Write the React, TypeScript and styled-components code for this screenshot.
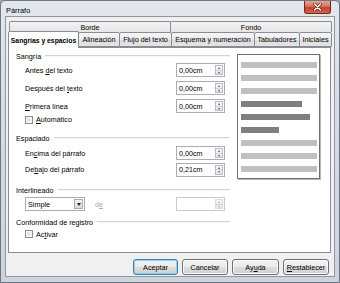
import React from 'react';
import styled, { createGlobalStyle } from 'styled-components';

const GlobalStyle = createGlobalStyle`
  html, body {
    margin: 0;
    padding: 0;
    width: 340px;
    height: 283px;
    overflow: hidden;
    background: #9aa6b2;
  }
  * {
    box-sizing: border-box;
  }
`;

const StyledWindow = styled.div`
  width: 340px;
  height: 283px;
  display: flex;
  flex-direction: column;
  background: linear-gradient(180deg, #e4e8ed 0%, #d6dce3 40%, #cdd4dc 100%);
  border: 1px solid #6b7785;
  border-radius: 5px 5px 0 0;
  font-family: 'Liberation Sans', Arial, sans-serif;
  font-size: 7.2px;
  color: #000;
`;

const StyledTitleBar = styled.div`
  height: 17px;
  display: flex;
  align-items: flex-start;
  padding-left: 5px;
`;

const StyledTitle = styled.span`
  margin-top: 5px;
  font-size: 7.4px;
`;

const StyledClose = styled.div`
  margin-left: auto;
  margin-right: 8px;
  width: 27px;
  height: 13px;
  border: 1px solid #6e2a22;
  border-top: none;
  border-radius: 0 0 3px 3px;
  background: linear-gradient(180deg, #e8a593 0%, #d8705a 45%, #c7432d 55%, #d7624a 100%);
  display: flex;
  align-items: center;
  justify-content: center;
`;

const StyledClient = styled.div`
  flex: 1;
  margin: 0 4px 0 4px;
  background: #f0f0f0;
  border: 1px solid #8d98a5;
  display: flex;
  flex-direction: column;
  padding: 4px 3px 1px 2px;
`;

const StyledTabRow = styled.div<{ $height: number; $offset: number }>`
  display: flex;
  align-items: flex-end;
  height: ${(p) => p.$height}px;
  padding-left: ${(p) => p.$offset}px;
  position: relative;
`;

const StyledTab = styled.div<{ $width: number; $active?: boolean }>`
  width: ${(p) => p.$width}px;
  height: ${(p) => (p.$active ? 17 : 15)}px;
  margin-bottom: ${(p) => (p.$active ? -1 : 0)}px;
  margin-right: -1px;
  display: flex;
  align-items: center;
  justify-content: center;
  border: 1px solid #898c95;
  border-bottom: ${(p) => (p.$active ? 'none' : '1px solid #898c95')};
  border-radius: 2px 2px 0 0;
  background: ${(p) =>
    p.$active ? '#ffffff' : 'linear-gradient(180deg, #f6f6f6 0%, #ebebeb 50%, #dddddd 51%, #e4e4e4 100%)'};
  font-weight: ${(p) => (p.$active ? 'bold' : 'normal')};
  font-size: ${(p) => (p.$active ? 6.8 : 7.2)}px;
  white-space: nowrap;
  position: relative;
  z-index: ${(p) => (p.$active ? 2 : 1)};
`;

const StyledBackTab = styled(StyledTab)`
  height: 11px;
  border-bottom: none;
  background: linear-gradient(180deg, #f4f4f4 0%, #e6e6e6 100%);
`;

const StyledPanel = styled.div`
  height: 206px;
  background: #ffffff;
  border: 1px solid #898c95;
  display: flex;
  padding: 1px 0 0 7px;
  position: relative;
  z-index: 1;
`;

const StyledForm = styled.div`
  width: 214px;
  display: flex;
  flex-direction: column;
`;

const StyledHeader = styled.div<{ $top: number }>`
  height: 10px;
  margin-top: ${(p) => p.$top}px;
  display: flex;
  align-items: center;
  gap: 4px;
  &::after {
    content: '';
    flex: 1;
    height: 1px;
    background: #d5d5d5;
    border-bottom: 1px solid #f4f4f4;
  }
`;

const StyledRow = styled.div<{ $height: number; $top?: number }>`
  height: ${(p) => p.$height}px;
  margin-top: ${(p) => p.$top ?? 0}px;
  display: flex;
  align-items: center;
  padding: 0 5px 0 9px;
`;

const StyledLabel = styled.span<{ $disabled?: boolean }>`
  color: ${(p) => (p.$disabled ? '#a0a0a0' : '#000')};
`;

const StyledSpin = styled.div<{ $disabled?: boolean }>`
  margin-left: auto;
  width: 49px;
  height: 14px;
  border: 1px solid ${(p) => (p.$disabled ? '#c8cbd0' : '#abadb3')};
  background: #fff;
  display: flex;
  align-items: center;
  padding-left: 2px;
`;

const StyledSpinText = styled.span`
  flex: 1;
`;

const StyledSpinButtons = styled.div<{ $disabled?: boolean }>`
  width: 8px;
  height: 10px;
  margin-right: 1px;
  display: flex;
  flex-direction: column;
  border: 1px solid ${(p) => (p.$disabled ? '#dcdcdc' : '#b9bcc2')};
  background: linear-gradient(180deg, #f6f7f9 0%, #e2e6ec 100%);
`;

const StyledArrow = styled.div<{ $up?: boolean; $disabled?: boolean }>`
  flex: 1;
  display: flex;
  align-items: center;
  justify-content: center;
  border-bottom: ${(p) => (p.$up ? '1px solid #d0d4da' : 'none')};
  &::before {
    content: '';
    border-left: 1.5px solid transparent;
    border-right: 1.5px solid transparent;
    ${(p) =>
      p.$up
        ? `border-bottom: 2px solid ${p.$disabled ? '#b8b8b8' : '#4d5a66'};`
        : `border-top: 2px solid ${p.$disabled ? '#b8b8b8' : '#4d5a66'};`}
  }
`;

const StyledCheck = styled.div`
  width: 8px;
  height: 8px;
  border: 1px solid #8e8f8f;
  background: linear-gradient(135deg, #dcdcdc 0%, #f4f4f4 100%);
  box-shadow: inset 0 0 0 1px #f6f6f6;
  margin-right: 3px;
`;

const StyledSelect = styled.div`
  width: 60px;
  height: 14px;
  border: 1px solid #abadb3;
  background: #fff;
  display: flex;
  align-items: center;
  padding-left: 2px;
`;

const StyledSelectButton = styled.div`
  margin-left: auto;
  margin-right: 1px;
  width: 9px;
  height: 10px;
  border: 1px solid #a9acb2;
  background: linear-gradient(180deg, #f2f2f2 0%, #d8d8d8 100%);
  display: flex;
  align-items: center;
  justify-content: center;
  &::before {
    content: '';
    border-left: 2.5px solid transparent;
    border-right: 2.5px solid transparent;
    border-top: 3px solid #222;
  }
`;

const StyledDe = styled.span`
  margin-left: 10px;
  color: #a9a9a9;
`;

const StyledPreview = styled.div`
  margin: 5px 0 0 7px;
  width: 83px;
  height: 125px;
  border: 1px solid #6f6f6f;
  box-shadow: 1px 1px 0 #b8b8b8;
  background: #fff;
  display: flex;
  flex-direction: column;
  gap: 7px;
  padding: 7px 2px 0 3px;
`;

const StyledBar = styled.div<{ $width: number; $dark?: boolean }>`
  width: ${(p) => p.$width}px;
  height: 6px;
  background: ${(p) => (p.$dark ? '#7f7f7f' : '#c0c0c0')};
`;

const StyledButtonRow = styled.div`
  display: flex;
  justify-content: flex-end;
  gap: 4px;
  margin-top: 6px;
  padding-right: 2px;
`;

const StyledButton = styled.div<{ $width: number; $default?: boolean }>`
  width: ${(p) => p.$width}px;
  height: 16px;
  display: flex;
  align-items: center;
  justify-content: center;
  border: 1px solid ${(p) => (p.$default ? '#3c7fb1' : '#707070')};
  border-radius: 3px;
  background: linear-gradient(180deg, #f2f2f2 0%, #ebebeb 50%, #dddddd 51%, #cfcfcf 100%);
  box-shadow: inset 0 0 0 1px ${(p) => (p.$default ? '#8fd3f2' : '#fbfbfb')};
`;

const StyledBottomFrame = styled.div`
  height: 5px;
`;

const U = styled.span`
  text-decoration: underline;
  text-underline-offset: 1px;
`;

const SpinField = ({ value, disabled }: { value?: string; disabled?: boolean }) => (
  <StyledSpin $disabled={disabled}>
    <StyledSpinText>{value}</StyledSpinText>
    <StyledSpinButtons $disabled={disabled}>
      <StyledArrow $up $disabled={disabled} />
      <StyledArrow $disabled={disabled} />
    </StyledSpinButtons>
  </StyledSpin>
);

const backTabs = [
  { label: 'Borde', width: 162 },
  { label: 'Fondo', width: 162 },
];

const frontTabs = [
  { label: 'Sangrías y espacios', width: 71, active: true },
  { label: 'Alineación', width: 42 },
  { label: 'Flujo del texto', width: 53 },
  { label: 'Esquema y numeración', width: 84 },
  { label: 'Tabuladores', width: 46 },
  { label: 'Iniciales', width: 33 },
];

const bars = [
  { width: 76 },
  { width: 76 },
  { width: 76 },
  { width: 61, dark: true },
  { width: 69, dark: true },
  { width: 38, dark: true },
  { width: 76 },
  { width: 76 },
  { width: 76 },
];

const App = () => {
  return (
    <>
      <GlobalStyle />
      <StyledWindow>
        <StyledTitleBar>
          <StyledTitle>Párrafo</StyledTitle>
          <StyledClose>
            <svg width="9" height="8" viewBox="0 0 9 8">
              <path d="M1.5 1 L7.5 7 M7.5 1 L1.5 7" stroke="#4a1a14" strokeWidth="2.6" strokeLinecap="round" />
              <path d="M1.5 1 L7.5 7 M7.5 1 L1.5 7" stroke="#ffffff" strokeWidth="1.5" strokeLinecap="round" />
            </svg>
          </StyledClose>
        </StyledTitleBar>
        <StyledClient>
          <StyledTabRow $height={11} $offset={1}>
            {backTabs.map((t) => (
              <StyledBackTab key={t.label} $width={t.width}>
                {t.label}
              </StyledBackTab>
            ))}
          </StyledTabRow>
          <StyledTabRow $height={15} $offset={0}>
            {frontTabs.map((t) => (
              <StyledTab key={t.label} $width={t.width} $active={t.active}>
                {t.label}
              </StyledTab>
            ))}
          </StyledTabRow>
          <StyledPanel>
            <StyledForm>
              <StyledHeader $top={2}>Sangría</StyledHeader>
              <StyledRow $height={18}>
                <StyledLabel>
                  Antes <U>d</U>el texto
                </StyledLabel>
                <SpinField value="0,00cm" />
              </StyledRow>
              <StyledRow $height={18}>
                <StyledLabel>
                  Después del <U>t</U>exto
                </StyledLabel>
                <SpinField value="0,00cm" />
              </StyledRow>
              <StyledRow $height={18}>
                <StyledLabel>
                  <U>P</U>rimera línea
                </StyledLabel>
                <SpinField value="0,00cm" />
              </StyledRow>
              <StyledRow $height={9}>
                <StyledCheck />
                <StyledLabel>
                  <U>A</U>utomático
                </StyledLabel>
              </StyledRow>
              <StyledHeader $top={9}>Espaciado</StyledHeader>
              <StyledRow $height={16} $top={2}>
                <StyledLabel>
                  En<U>c</U>ima del párrafo
                </StyledLabel>
                <SpinField value="0,00cm" />
              </StyledRow>
              <StyledRow $height={17}>
                <StyledLabel>
                  De<U>b</U>ajo del párrafo
                </StyledLabel>
                <SpinField value="0,21cm" />
              </StyledRow>
              <StyledHeader $top={7}>Interlineado</StyledHeader>
              <StyledRow $height={14} $top={2}>
                <StyledSelect>
                  Simple
                  <StyledSelectButton />
                </StyledSelect>
                <StyledDe>
                  d<U>e</U>
                </StyledDe>
                <SpinField disabled />
              </StyledRow>
              <StyledHeader $top={6}>Conformidad de registro</StyledHeader>
              <StyledRow $height={10} $top={2}>
                <StyledCheck />
                <StyledLabel>
                  Ac<U>t</U>ivar
                </StyledLabel>
              </StyledRow>
            </StyledForm>
            <StyledPreview>
              {bars.map((b, i) => (
                <StyledBar key={i} $width={b.width} $dark={b.dark} />
              ))}
            </StyledPreview>
          </StyledPanel>
          <StyledButtonRow>
            <StyledButton $width={45} $default>
              Aceptar
            </StyledButton>
            <StyledButton $width={46}>Cancelar</StyledButton>
            <StyledButton $width={47}>
              Ay<U>u</U>da
            </StyledButton>
            <StyledButton $width={46}>
              <U>R</U>establecer
            </StyledButton>
          </StyledButtonRow>
        </StyledClient>
        <StyledBottomFrame />
      </StyledWindow>
    </>
  );
};

export default App;
